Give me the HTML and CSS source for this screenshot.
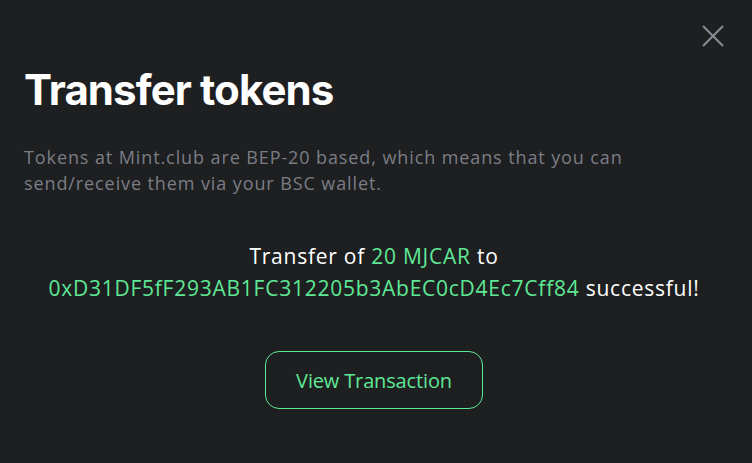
FILE: index.html
```html
<!DOCTYPE html>
<html lang="en">
<head>
  <meta charset="UTF-8">
  <meta name="viewport" content="width=device-width, initial-scale=1.0">
  <title>Transfer tokens</title>
  <link rel="stylesheet" href="styles.css">
</head>
<body>
  <div class="modal">
    <button class="close" aria-label="Close">
      <svg width="24" height="24" viewBox="0 0 24 24">
        <path d="M2 2 L22 22 M22 2 L2 22" stroke="#8a8c96" stroke-width="2" fill="none"/>
      </svg>
    </button>
    <h1>Transfer tokens</h1>
    <p class="desc">Tokens at Mint.club are BEP-20 based, which means that you can send/receive them via your BSC wallet.</p>
    <p class="result">
      Transfer of <span class="hl">20 MJCAR</span> to<br>
      <span class="hl">0xD31DF5fF293AB1FC312205b3AbEC0cD4Ec7Cff84</span> successful!
    </p>
    <div class="actions">
      <button class="btn">View Transaction</button>
    </div>
  </div>
</body>
</html>
```

FILE: styles.css
```css
body {
  margin: 0;
  padding: 0;
  background: #1e1f21;
  font-family: "Open Sans", sans-serif;
  color: #fff;
}
.modal {
  position: relative;
  padding: 64px 28px 0 24px;
}
.close {
  position: absolute;
  top: 24px;
  right: 27px;
  background: none;
  border: 0;
  padding: 0;
  width: 24px;
  height: 24px;
}
h1 {
  margin: 0;
  font-family: Inter, sans-serif;
  font-weight: 700;
  font-size: 42px;
  line-height: 52px;
  letter-spacing: -0.9px;
}
.desc {
  margin: 28px 0 0;
  color: #7b7d86;
  font-size: 18px;
  line-height: 26px;
  max-width: 640px;
  letter-spacing: 0.9px;
}
.result {
  margin: 44px 0 0;
  text-align: center;
  font-size: 21px;
  line-height: 32px;
  letter-spacing: 0.75px;
}
.hl {
  color: #5ee896;
}
.actions {
  display: flex;
  justify-content: center;
  margin-top: 47px;
}
.btn {
  width: 218px;
  height: 58px;
  background: transparent;
  border: 1px solid #5ee896;
  border-radius: 14px;
  color: #5ee896;
  font-family: "Open Sans", sans-serif;
  font-size: 20px;
  letter-spacing: -0.15px;
}
```
